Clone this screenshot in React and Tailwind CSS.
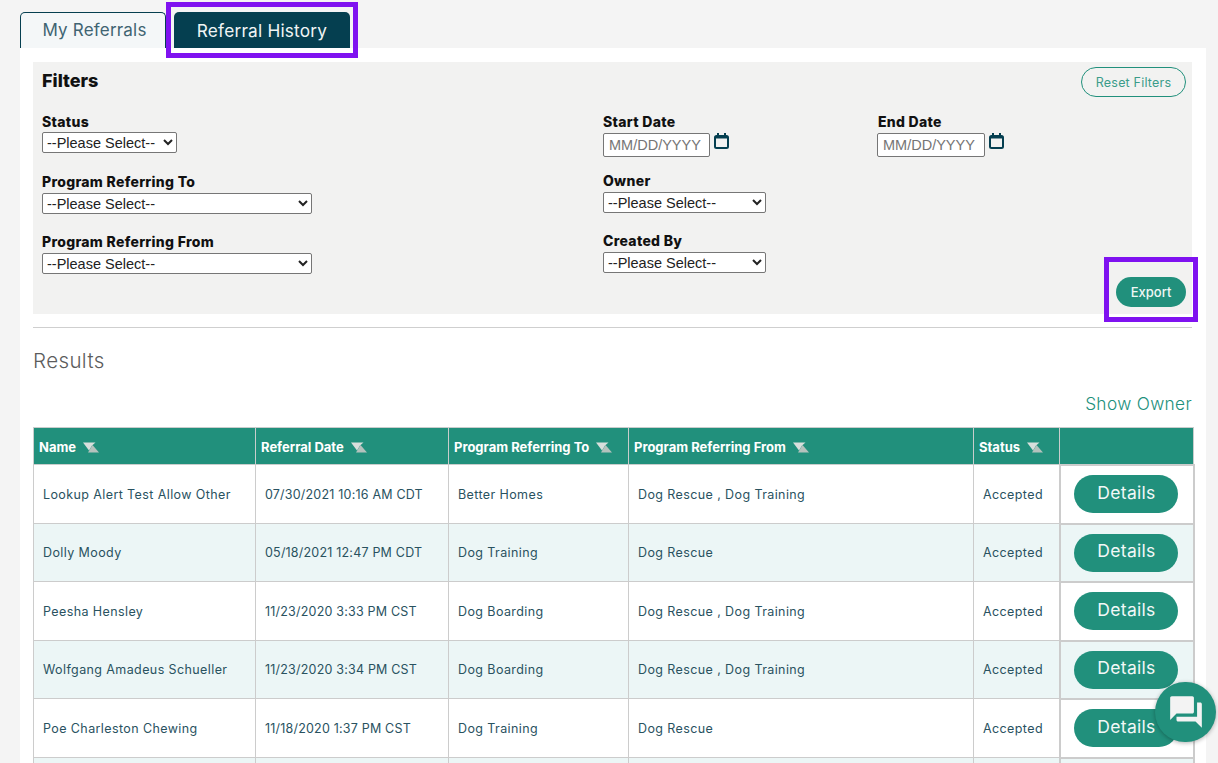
import React from "react";
import { MdQuestionAnswer } from "react-icons/md";

const rows = [
  ["Lookup Alert Test Allow Other", "07/30/2021 10:16 AM CDT", "Better Homes", "Dog Rescue , Dog Training", "h-[59px]"],
  ["Dolly Moody", "05/18/2021 12:47 PM CDT", "Dog Training", "Dog Rescue", "h-[58px]"],
  ["Peesha Hensley", "11/23/2020 3:33 PM CST", "Dog Boarding", "Dog Rescue , Dog Training", "h-[59px]"],
  ["Wolfgang Amadeus Schueller", "11/23/2020 3:34 PM CST", "Dog Boarding", "Dog Rescue , Dog Training", "h-[58px]"],
  ["Poe Charleston Chewing", "11/18/2020 1:37 PM CST", "Dog Training", "Dog Rescue", "h-[59px]"],
  ["", "", "", "", "h-[59px]"],
];

const SortIcon = () => (
  <svg width="16" height="11" viewBox="0 0 16 11" className="inline-block ml-[7px] align-[-1px]">
    <polygon points="9.5,3 16,10.5 5,10.5" fill="#b4c2bd" />
    <polygon points="0,0.5 12.5,0.5 9,3.5 6,8.5" fill="#d8dfdc" />
  </svg>
);

const CalendarIcon = () => (
  <svg width="15" height="16" viewBox="0 0 15 16" className="ml-[4px] shrink-0">
    <rect x="1" y="3" width="13" height="12" rx="1.5" fill="none" stroke="#053f50" strokeWidth="2" />
    <rect x="1" y="3" width="13" height="2.5" fill="#053f50" />
    <rect x="3" y="0" width="2" height="4" fill="#053f50" />
    <rect x="10" y="0" width="2" height="4" fill="#053f50" />
  </svg>
);

const Label = ({ children }) => (
  <label className="block text-[14px] leading-[16px] font-extrabold text-[#111] tracking-[0.3px]">{children}</label>
);

const Select = ({ width }) => (
  <select className={`block ${width} h-[21px] bg-white border border-[#767676] rounded-[2px] text-[14.5px] text-[#222] font-['Liberation_Sans',sans-serif]`}>
    <option>--Please Select--</option>
  </select>
);

const DateField = ({ width }) => (
  <div className="flex items-start">
    <input
      placeholder="MM/DD/YYYY"
      className={`${width} h-[24px] bg-white border border-[#767676] rounded-[2px] px-[5px] text-[14.5px] font-['Liberation_Sans',sans-serif] placeholder:text-[#757575]`}
    />
    <CalendarIcon />
  </div>
);

const Th = ({ children, width }) => (
  <th className={`${width} bg-[#21907c] border border-[#c9cdcc] text-left text-white text-[13px] font-bold pl-[5px] pt-[3px] pb-0 pr-0`}>
    {children}
    {children && <SortIcon />}
  </th>
);

const Td = ({ children, date }) => (
  <td className={`border border-[#cccccc] pl-[9px] pt-[2px] text-[12.5px] ${date ? "tracking-[0.2px]" : "tracking-[0.4px]"} text-[#29525f]`}>{children}</td>
);

export default function App() {
  return (
    <div className="relative h-[763px] overflow-hidden bg-[#f4f4f4] font-['Inter',sans-serif] pt-[12px] px-[20px]">
      <div className="flex items-end h-[36px]">
        <button className="w-[146px] h-[36px] pl-[3px] pt-[1px] bg-[#f4f7f8] border border-b-0 border-[#053f50] rounded-t-[5px] text-[17px] text-[#3f6472] tracking-[0.2px]">
          My Referrals
        </button>
        <div className="relative ml-[8px]">
          <button className="w-[176px] h-[36px] pt-[1px] bg-[#053f50] rounded-t-[5px] text-[17.25px] text-[#f0f5f5] tracking-[0.2px]">
            Referral History
          </button>
          <div className="absolute -left-[8px] -top-[10px] w-[192px] h-[56px] border-[5px] border-[#7f12f0] pointer-events-none" />
        </div>
      </div>

      <div className="w-[1186px] bg-white px-[13px] pt-[14px] h-[720px]">
        <section className="relative h-[252px] w-[1159px] bg-[#f2f2f1] pl-[9px] pt-[9px]">
          <h2 className="text-[18px] leading-[20px] font-extrabold text-[#111]">Filters</h2>
          <div className="flex mt-[23px]">
            <div className="w-[561px] flex flex-col">
              <Label>Status</Label>
              <div className="mt-[2px]"><Select width="w-[135px]" /></div>
              <div className="mt-[21px]"><Label>Program Referring To</Label></div>
              <div className="mt-[3px]"><Select width="w-[270px]" /></div>
              <div className="mt-[20px]"><Label>Program Referring From</Label></div>
              <div className="mt-[3px]"><Select width="w-[270px]" /></div>
            </div>
            <div className="w-[275px] flex flex-col">
              <Label>Start Date</Label>
              <div className="mt-[3px]"><DateField width="w-[107px]" /></div>
              <div className="mt-[16px]"><Label>Owner</Label></div>
              <div className="mt-[3px]"><Select width="w-[163px]" /></div>
              <div className="mt-[20px]"><Label>Created By</Label></div>
              <div className="mt-[3px]"><Select width="w-[163px]" /></div>
            </div>
            <div className="flex flex-col">
              <Label>End Date</Label>
              <div className="mt-[3px] -ml-[1px]"><DateField width="w-[108px]" /></div>
            </div>
          </div>
          <button className="absolute right-[6px] top-[5px] w-[105px] h-[30px] pt-[2px] rounded-full border border-[#21907c] text-[12.5px] text-[#3b9c8a] tracking-[0.2px]">
            Reset Filters
          </button>
          <button className="absolute right-[6px] top-[215px] w-[70px] h-[30px] pt-[1px] rounded-full bg-[#21907c] text-[13px] font-medium text-[#f0f7f5]">
            Export
          </button>
          <div className="absolute left-[1071px] top-[195px] w-[94px] h-[65px] border-[5px] border-[#7f12f0] pointer-events-none" />
        </section>

        <hr className="mt-[13px] w-[1159px] border-0 border-t border-[#cfcfcf]" />
        <h3 className="mt-[20px] text-[20.5px] leading-[26px] tracking-[0.4px] font-light text-[#5c5c5c]">Results</h3>
        <div className="mt-[19px] w-[1159px] text-right text-[17.25px] leading-[22px] tracking-[0.35px] font-light text-[#21907c]">Show Owner</div>

        <table className="mt-[12px] w-[1160px] table-fixed border-collapse">
          <thead>
            <tr className="h-[37px]">
              <Th width="w-[222px]">Name</Th>
              <Th width="w-[193px]">Referral Date</Th>
              <Th width="w-[180px]">Program Referring To</Th>
              <Th width="w-[345px]">Program Referring From</Th>
              <Th width="w-[86px]">Status</Th>
              <Th width="w-[134px]" />
            </tr>
          </thead>
          <tbody>
            {rows.map((r, i) => (
              <tr key={i} className={`${r[4]} ${i % 2 ? "bg-[#ecf6f6]" : "bg-white"}`}>
                <Td>{r[0]}</Td>
                <Td date>{r[1]}</Td>
                <Td>{r[2]}</Td>
                <Td>{r[3]}</Td>
                <Td>{r[0] && "Accepted"}</Td>
                <td className="border-2 border-[#cccccc] text-center p-0 pr-[2px]">
                  {r[0] && (
                    <button className="w-[104px] h-[38px] pb-[2px] pl-[2px] rounded-full bg-[#21907c] text-[17.5px] tracking-[0.3px] text-[#f2f8f7]">
                      Details
                    </button>
                  )}
                </td>
              </tr>
            ))}
          </tbody>
        </table>
      </div>

      <button className="absolute left-[1155px] top-[682px] w-[61px] h-[60px] rounded-full bg-[#21907c] shadow-[0_1px_4px_rgba(0,0,0,0.3)] flex items-center justify-center text-[#f3f3f3]">
        <MdQuestionAnswer size={38} />
      </button>
    </div>
  );
}
